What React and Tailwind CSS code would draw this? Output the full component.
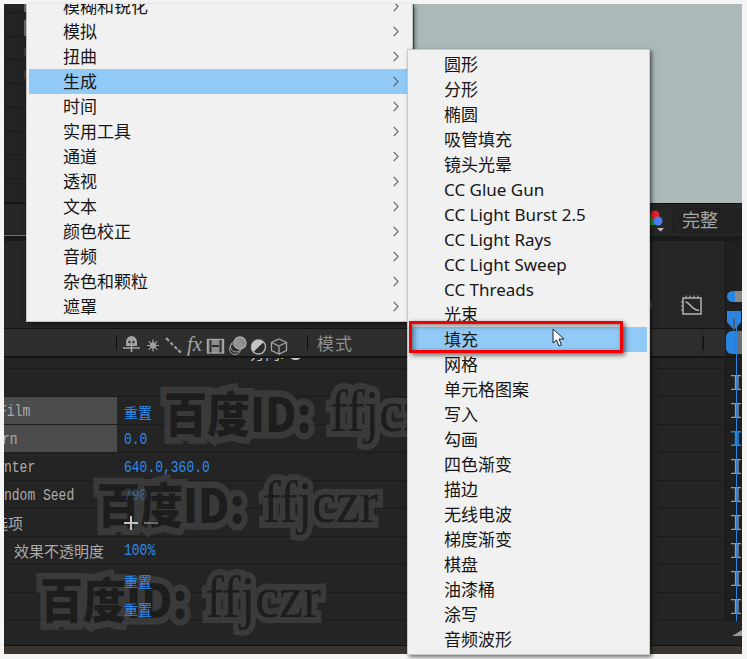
const CJK = "font-['Noto_Sans','Noto_Sans_CJK_SC',sans-serif]";
const MONO = "font-['Liberation_Mono','Noto_Sans_CJK_SC',monospace]";

const mainItems = ["模糊和锐化","模拟","扭曲","生成","时间","实用工具","通道","透视","文本","颜色校正","音频","杂色和颗粒","遮罩"];
const subItems = ["圆形","分形","椭圆","吸管填充","镜头光晕","CC Glue Gun","CC Light Burst 2.5","CC Light Rays","CC Light Sweep","CC Threads","光束","填充","网格","单元格图案","写入","勾画","四色渐变","描边","无线电波","梯度渐变","棋盘","油漆桶","涂写","音频波形"];

function Chevron() {
  return (
    <svg width="6" height="11" viewBox="0 0 6 11" fill="none" stroke="#5a5a5a" strokeWidth="1.1">
      <path d="M0.7 0.8 L5 5.5 L0.7 10.2" />
    </svg>
  );
}

function IBeam({ blue }) {
  const c = blue ? "#2a85e0" : "#9a9a9a";
  return (
    <svg width="10" height="15" viewBox="0 0 10 15" fill="none" stroke={c} strokeWidth={blue ? 1.5 : 1.3}>
      <path d="M0 0.7 H10 M0 14.3 H10 M4.5 0.7 V14.3 M7 0.7 V14.3" />
    </svg>
  );
}

function Row({ label, labelBg, value, beam, blue, labelClass = "", valueClass = "pt-[2px]" }) {
  return (
    <div className="flex h-[28px] border-b border-[#1c1c1c] items-stretch">
      <div className={`w-[113px] shrink-0 overflow-hidden whitespace-nowrap flex items-center pt-[2px] text-[13px] text-[#ababab] ${MONO} ${labelBg ? "bg-[#4c4c4c]" : ""}`}>
        <span className={`inline-block ${labelClass}`}>{label}</span>
      </div>
      <div className={`flex-1 pl-[7px] flex items-center text-[#2d8ceb] ${MONO} text-[13px] ${valueClass}`}>{value}</div>
      <div className="w-[17px] shrink-0 bg-[#1f1f1f] border-l border-[#181818] flex items-center pl-[5px]">
        {beam && <IBeam blue={blue} />}
      </div>
    </div>
  );
}

function Watermark({ className }) {
  return (
    <div className={`absolute whitespace-nowrap flex items-baseline pointer-events-none opacity-60 ${className}`}>
      <span className="inline-block scale-y-[1.1] font-['Noto_Sans_CJK_SC',sans-serif] font-black text-[43px] text-[#191919] [-webkit-text-stroke:12px_#4a4a4a] [paint-order:stroke_fill]">百度ID:</span>
      <span className="inline-block scale-y-[1.08] ml-[18px] tracking-[-0.5px] font-['Liberation_Serif',serif] text-[55px] text-[#191919] [-webkit-text-stroke:11px_#4a4a4a] [paint-order:stroke_fill]">ffjczr</span>
    </div>
  );
}

function HeaderIcons() {
  return (
    <div className="flex items-center h-full">
      <svg width="172" height="24" viewBox="0 0 172 24" fill="none" stroke="#a3a3a3" strokeWidth="1.4" className="overflow-visible">
        <path d="M3 17 V13 a5.5 6 0 0 1 11 0 V17 Z" fill="#a3a3a3" stroke="none" transform="translate(0,-2)" />
        <path d="M0 17 H17 M8.5 15 V21" strokeWidth="1.6" />
        <circle cx="6.5" cy="11" r="1.2" fill="#2c2c2c" stroke="none" />
        <circle cx="10.5" cy="11" r="1.2" fill="#2c2c2c" stroke="none" />
        <circle cx="30" cy="14.5" r="3" fill="#a3a3a3" stroke="none" />
        <path d="M30 8.5 V20.5 M24 14.5 H36 M25.8 10.3 L34.2 18.7 M34.2 10.3 L25.8 18.7" strokeWidth="1.2" />
        <path d="M43 7 L46 10 M47.5 11.5 L50 14 M51.5 15.5 L54 18 M55 19 L58 21.5" strokeWidth="2" />
        <rect x="84.5" y="8.5" width="16" height="13.5" fill="#8d8d8d" stroke="#a8a8a8" />
        <path d="M87.5 9 V21.5 M97.5 9 V21.5 M89 15 H96" stroke="#2c2c2c" strokeWidth="2" />
        <circle cx="117" cy="12" r="6" fill="#8c8c8c" stroke="#a8a8a8" />
        <circle cx="113" cy="15.5" r="5.5" stroke="#a0a0a0" strokeWidth="1" />
        <circle cx="112" cy="18" r="5.5" stroke="#a0a0a0" strokeWidth="1" />
        <circle cx="135.5" cy="16" r="7" fill="#2c2c2c" stroke="#b5b5b5" />
        <path d="M130.6 21 A7 7 0 0 1 140.5 11 Z" fill="#c4c4c4" stroke="none" />
        <path d="M156 8 L163.5 11.5 V19.5 L156 23 L148.5 19.5 V11.5 Z M148.5 11.5 L156 15 L163.5 11.5 M156 15 V23" strokeWidth="1.3" />
      </svg>
    </div>
  );
}

const ChineseLink = () => <span className={`relative z-10 text-[14px] ${CJK}`}>重置</span>;
const Tall = ({ children }) => <span className="inline-block scale-y-[1.2]">{children}</span>;

export default function App() {
  const leftRows = ["bg-[#666] mt-[7px] h-[16px]", "bg-[#3c3c3c] mt-[11px] h-[8px]", "bg-[#3c3c3c] mt-[11px] h-[8px]", "", "", "", "", ""];
  return (
    <div className={`relative w-[747px] h-[659px] overflow-hidden bg-[#f5f5f5] pt-[4px] pl-[4px] pr-[5px] pb-[5px] ${CJK}`}>
      <div className="relative flex flex-col h-full bg-[#242424]">
        {/* preview */}
        <div className="flex h-[199px] shrink-0">
          <div className="w-[406px] shrink-0 bg-[#232323] flex flex-col">
            <div className="h-[10px] border-b border-[#1a1a1a]"><div className="ml-[20px] w-[2px] h-full bg-[#666]" /></div>
            {leftRows.map((c, i) => (
              <div key={i} className="h-[28px] border-b border-[#1a1a1a]">
                {c && <div className={`ml-[20px] w-[2px] ${c}`} />}
              </div>
            ))}
          </div>
          <div className="w-[4px] shrink-0 bg-[#5e5e5e]" />
          <div className="flex-1 bg-[#abb9b9]" />
        </div>
        {/* viewer toolbar */}
        <div className="h-[33px] shrink-0 bg-[#262626] border-t border-[#111] flex items-center justify-end">
          <svg width="20" height="26" viewBox="0 0 20 26" className="mr-[7px]">
            <circle cx="7" cy="14" r="4.5" fill="#1c8f2a" />
            <circle cx="10" cy="8" r="4.5" fill="#e8202a" />
            <circle cx="13" cy="14" r="4.5" fill="#4c7df0" />
            <path d="M12 21 H19 L15.5 24.5 Z" fill="#bdbdbd" />
          </svg>
          <div className="w-[70px] h-[25px] rounded-l-[4px] border border-[#1d1d1d] bg-[#222] pl-[9px] flex items-center text-[18px] text-[#a5a5a5]">完整</div>
        </div>
        <div className="h-[5px] shrink-0 bg-[#1a1a1a]">
          <div className="w-[22px] h-px bg-[#2d7fd3] -mt-px" />
        </div>
        {/* composition header */}
        <div className="h-[88px] shrink-0 bg-[#262626] flex justify-end items-end border-b border-[#141414]">
          <svg width="16" height="16" viewBox="0 0 16 16" fill="none" stroke="#5c5c5c" strokeWidth="1.5" className="mb-[15px] mr-[29px]">
            <circle cx="8" cy="8" r="7" />
          </svg>
          <div className="mb-[12px] mr-[22px]">
            <svg width="22" height="21" viewBox="0 0 22 21" fill="none" stroke="#b4b4b4" strokeWidth="1.5">
              <rect x="2" y="3" width="18" height="16" />
              <path d="M5 0.5 V3 M9 0.5 V3 M13 0.5 V3 M17 0.5 V3 M0 7 H2 M0 11 H2 M0 15 H2" strokeWidth="1" />
              <path d="M4.5 7 C9 7 10 15 18 15.5" />
            </svg>
          </div>
          <div className="w-[17px] h-full flex flex-col shrink-0 bg-[#202020] border-l border-[#181818] justify-start pt-[50px]">
            <div className="flex h-[11px] ml-[1px]"><div className="w-[8px] bg-[#2a85e0] rounded-l-full" /><div className="flex-1 bg-[#8a8a8a]" /></div>
          </div>
        </div>
        <div className="h-[29px] shrink-0 bg-[#2e2e2e] border-b-2 border-[#151515] flex items-center text-[#a0a0a0]">
          <div className="w-[112px] h-full shrink-0" />
          <div className="w-px h-[15px] bg-[#111]" />
          <div className="ml-[6px] relative">
            <HeaderIcons />
            <span className="absolute left-[64px] top-[1px] text-[21px] italic leading-[24px] font-['Liberation_Serif',serif] text-[#a3a3a3]">fx</span>
          </div>
          <div className="ml-[12px] w-px h-[15px] bg-[#111]" />
          <div className="ml-[9px] pt-[3px] text-[17px] tracking-[1px] text-[#8f8f8f]">模式</div>
          <div className="flex-1" />
          <div className="w-[23px] h-full shrink-0 flex items-center border-l border-[#222]"><div className="w-px h-[14px] bg-[#111]" /></div>
          <div className="w-[17px] h-full shrink-0 bg-[#202020] pl-[1px] py-[2px] flex">
            <div className="h-full w-[9px] bg-[#2a85e0] rounded-l-[6px]" />
            <div className="h-full flex-1 bg-[#6e6e6e]" />
          </div>
        </div>
        {/* layer rows */}
        <div className="flex-1 flex flex-col min-h-0">
          <div className="h-[11px] shrink-0 flex border-b border-[#1c1c1c] overflow-hidden">
            <div className="ml-[246px] flex-1 text-[15px] leading-[15px] text-[#c8c8c8] -mt-[12px]">方向: ●</div>
            <div className="w-[17px] shrink-0 bg-[#1f1f1f] border-l border-[#181818]" />
          </div>
          <Row beam />
          <Row label={<Tall>Film</Tall>} labelBg labelClass="-ml-[5px]" value={<ChineseLink />} valueClass="pt-[4px]" beam />
          <Row label={<Tall>rn</Tall>} labelBg labelClass="-ml-[2px]" value={<Tall>0.0</Tall>} beam blue />
          <Row label={<Tall>nter</Tall>} value={<Tall>640.0,360.0</Tall>} beam />
          <Row label={<Tall>ndom Seed</Tall>} value={<Tall>790</Tall>} beam />
          <Row label={<span className={`text-[15px] ${CJK}`}>选项</span>} labelClass="-ml-[11px]" value={
            <span className="relative z-10 flex items-center gap-[6px]">
              <span className="relative w-[14px] h-[14px]">
                <span className="absolute left-0 top-[6px] w-[14px] h-[2px] bg-[#c4c4c4]" />
                <span className="absolute left-[6px] top-0 w-[2px] h-[14px] bg-[#c4c4c4]" />
              </span>
              <span className="w-[14px] h-[2px] bg-[#6e6e6e]" />
            </span>
          } valueClass="" beam />
          <Row label={<span className={`text-[15px] ${CJK}`}>效果不透明度</span>} labelClass="ml-[10px]" value={<Tall>100%</Tall>} valueClass="pt-[1px]" beam />
          <Row value={<ChineseLink />} valueClass="pt-[5px]" beam />
          <Row value={<ChineseLink />} valueClass="pt-[5px]" beam />
          <div className="flex-1 bg-[#252525] border-b border-[#111] flex items-center justify-end">
            <svg width="10" height="6" viewBox="0 0 10 6"><path d="M0 6 L10 0 V6 Z" fill="#9a9a9a" /></svg>
          </div>
          <div className="h-[8px] shrink-0 bg-[#3a352f]" />
        </div>

        <Watermark className="left-[160px] top-[367px]" />
        <Watermark className="left-[93px] top-[458px]" />
        <Watermark className="left-[36px] top-[553px]" />
        {/* blue current-time line */}
        <div className="absolute left-[731.5px] top-[310px] w-[1.5px] h-[307px] bg-[#2a85e0]" />
        <svg className="absolute left-[722px] top-[306px]" width="16" height="22" viewBox="0 0 16 22">
          <path d="M1 1 H15 V12 L8 20 L1 12 Z" fill="#2a85e0" />
          <path d="M8 8 V20" stroke="#555" strokeWidth="1.5" />
        </svg>
      </div>

      {/* effect category menu */}
      <div className="absolute left-[26px] top-[4px] w-[387px] h-[318px] overflow-hidden bg-[#f1f1f1] border-r border-b border-l border-[#c4c4c4] shadow-[2px_2px_4px_rgba(0,0,0,0.5)] pl-[2px]">
        <div className="-mt-[10px]">
          {mainItems.map((t) => (
            <div key={t} className={`h-[25px] flex items-center text-[17px] leading-[25px] text-[#161616] pl-[34px] pr-[13px] justify-between ${t === "生成" ? "bg-[#91c9f7]" : ""}`}>
              <span>{t}</span>
              <Chevron />
            </div>
          ))}
        </div>
      </div>

      {/* generate submenu */}
      <div className="absolute left-[407px] top-[49px] w-[243px] h-[606px] bg-[#f1f1f1] border border-[#c8c8c8] shadow-[2px_2px_4px_rgba(0,0,0,0.55)] pt-[2px] px-[2px]">
        {subItems.map((t) => (
          <div key={t} className={`h-[25px] flex items-center text-[17px] leading-[25px] text-[#161616] pl-[34px] ${t === "填充" ? "bg-[#91c9f7]" : ""}`}>
            {t}
          </div>
        ))}
      </div>

      {/* annotation */}
      <div className="absolute left-[409px] top-[321px] w-[214px] h-[32px] border-[3px] border-[#f00000] shadow-[2px_2px_5px_rgba(0,0,0,0.6),inset_2px_2px_5px_rgba(0,0,0,0.45)]" />
      <svg className="absolute left-[552px] top-[328px]" width="13" height="19" viewBox="0 0 13 19">
        <path d="M1 1 V15 L4.5 12 L7 18 L9.5 17 L7 11 H12 Z" fill="#fff" stroke="#222" strokeWidth="1" />
      </svg>
    </div>
  );
}
